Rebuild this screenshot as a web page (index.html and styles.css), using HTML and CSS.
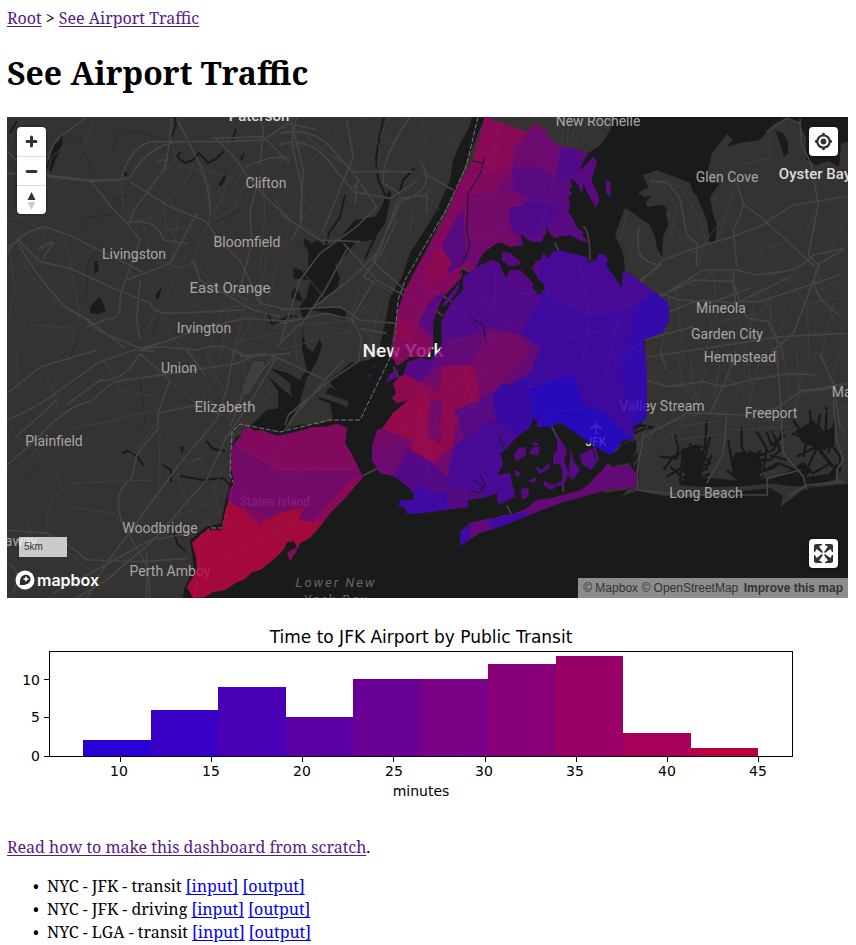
FILE: index.html
```html
<!DOCTYPE html>
<html lang="en">
<head>
<meta charset="utf-8">
<title>See Airport Traffic</title>
<link rel="stylesheet" href="styles.css">
</head>
<body>
<nav><a class="visited" href="#root">Root</a> &gt; <a class="visited" href="#traffic">See Airport Traffic</a></nav>
<main>
<h1>See Airport Traffic</h1>

<section class="map" aria-label="Map">
<svg class="map-canvas" viewBox="7 117 841 481" role="img" aria-label="Transit time by district">
<defs>
<path id="bronx" d="M485 117L527 132 536 122 538 126 547 130 549 139 560 145 588 153 583 161 579 172 587 164 593 157 597 162 594 171 591 180 598 195 599 202 595 207 592 200 587 191 583 182 582 193 577 183 570 178 572 187 568 189 572 193 568 197 570 205 568 212 573 219 577 228 583 232 582 236 590 243 580 240 570 235 560 236 555 238 549 232 547 223 546 233 541 242 530 241 520 233 523 245 510 247 503 243 497 243 483 253 473 272 462 268 462 277 443 297 437 310 433 323 433 347 427 357 410 357 397 366 392 357 393 350 396 330 398 310 405 290 417 267 443 220 453 200 455 190 473 160 480 133Z"/>
<path id="queens" d="M463 277L480 265 493 260 500 264 503 273 506 278 510 270 520 270 533 283 533 288 538 295 543 292 545 288 543 283 539 280 532 268 536 261 541 260 543 253 549 259 552 252 560 250 565 252 587 257 588 262 596 260 599 254 604 254 608 260 606 265 622 288 622 275 625 270 658 295 668 303 669 320 663 332 643 340 646 360 647 418 633 427 634 439 623 440 617 448 610 455 593 445 560 422 550 427 537 427 537 420 533 418 530 427 517 437 506 449 500 453 503 464 497 475 510 473 515 497 498 505 497 493 490 496 480 498 468 500 468 507 422 513 407 514 405 508 398 505 401 500 413 500 414 494 408 487 397 478 389 475 380 473 372 460 372 447 377 430 382 429 393 413 399 408 408 400 397 403 392 398 396 393 393 383 403 375 408 362 420 358 430 360 440 350 442 340 441 325 443 317 452 302 463 290Z"/>
<path id="rockaway" d="M460 532L470 523 487 519 498 517 503 515 510 515 524 510 537 500 552 498 570 493 581 490 588 485 597 475 603 470 607 463 613 467 630 465 637 475 636 487 607 490 560 503 527 516 510 523 480 533 460 546Z"/>
<path id="staten" d="M247 427L255 431 262 430 277 436 295 432 313 427 325 427 337 424 347 428 345 443 350 451 363 477 345 498 330 513 322 524 310 538 300 543 296 552 290 561 287 553 297 547 294 541 287 542 284 549 275 558 260 570 252 572 245 579 237 582 225 590 213 592 205 597 193 598 187 587 197 570 196 556 192 543 207 530 222 530 225 512 228 503 229 491 234 483 231 466 232 447Z"/>
<path id="islands" d="M514 455L519 448 526 447 526 455 516 461ZM530 451L534 447 540 447 538 455 530 454ZM528 481L536 477 535 483ZM521 489L528 488 529 496 522 500ZM535 467L542 470 549 463 550 468 540 474ZM544 481L556 486 552 490 544 486ZM532 443l4-1 3 3-5 1ZM515 470l5 2-1 5-4-2ZM557 434L567 450 564 461 569 474 563 486 553 485 563 480 563 474 560 464 553 464 553 456 557 450ZM580 455L595 447 599 459 591 470 582 464ZM571 448L573 460 577 466 580 470 573 480 568 475 570 462ZM502 252l8 1 10 8-1 4-10 1-7-6ZM606 180L611 183 610 197 606 192ZM397 377L398 369 390 374 386 383ZM442 305l18-23-3 10-12 14zM373 365l2 2-2 1zM368 375l3 0-2 3z"/>
<clipPath id="queens-clip"><use href="#queens"/></clipPath>
<clipPath id="bronx-clip"><use href="#bronx"/></clipPath>
<clipPath id="staten-clip"><use href="#staten"/></clipPath>
</defs>
<rect class="land" x="7" y="117" width="841" height="481"/>

<g class="water">
<path d="M472 117L468 130 462 140 457 151 453 160 450 180 437 210 423 233 410 253 402 277 390 297 385 323 380 345 383 352 368 360 350 363 340 372 328 380 336 390 349 400 347 408 330 403 333 420 318 424 298 425 281 432 266 431 254 427 236 437 231 448 231 480 225 503 221 523 206 527 190 540 194 568 184 589 183 598 848 598 848 484 806 488 780 507 783 496 770 488 690 497 664 496 637 491 622 496 629 488 639 479 636 440 622 444 612 457 618 465 630 463 630 489 560 500 545 420 600 430 620 440 640 427 655 427 642 424 645 340 658 296 625 270 623 253 615 235 618 227 625 208 632 212 638 217 650 225 655 237 657 248 662 257 663 237 668 225 666 213 668 210 663 205 648 207 645 203 652 195 645 197 638 193 648 187 643 175 657 170 690 183 692 190 697 197 707 220 710 243 715 243 717 225 713 215 710 197 720 183 710 183 708 170 712 153 727 134 733 139 727 147 740 143 760 140 765 134 773 125 787 117 612 117 612 127 601 145 588 153 560 145 520 250 455 300 435 360 397 366 390 350 398 310 455 190 485 117Z"/>
<path d="M785 117L798 122 806 137 806 160 816 165 828 161 839 167 841 143 848 142 848 117ZM775 130L784 134 788 143 788 153 784 157 779 140Z"/>
<path d="M540 225L600 240 620 295 480 290 450 320 445 370 390 400 380 360 425 345 425 310 460 260 500 235ZM490 430L560 415 612 445 618 462 600 500 500 520Z"/>
<path d="M54 145L59 141 63 133 62 145 58 154 51 172 46 167ZM94 262l3-2 2 10-4 4zM90 307l9-10 3 4 4 10-8 3-8-1zM156 294l6-8-3 12-3 2zM219 184l7-12 0 5-5 10zM240 158l5-7-3 10zM182 454l-2-8 4 1zM123 170l5 4-3 3z"/>
<g transform="translate(230 220) scale(.333333)">
<path d="M60 620l50-50 35-5 0-50-30-45 70 60-5-40-60-45 55 15 35 20 20-30-15-70 5-70-10-50 20-30 10-50-50-5 0-30 45 10 0-60-15-25 5-15 20 15 20-10 20 20 40-20 50-60 60-10 20-30 20-50 10 10-20 90-35 50-50 5-50 60-15 10 15 40-10 30-40 30-20 25 60 5 30 5-5 30-70-25-35-5-20 30 0 45 10 40 20 10 20-40 5 25-15 45-30 50-20 70-30 60-20 70-20 35z"/>
<path d="M300 500l60 35 0 10-75-25zM265 530l75 25 20 15-90-30zM195 205l15 15 10 25-35-10 0-20z"/>
</g>
</g>
<g class="creek">
<path d="M384 117l-5 22-3 20 2 20 8 18-2 12-7 10-2 18-10 22M415 168l-12 12-6 22M345 195l-5 22-11 16-4 16 5 20-2 14M175 117l1 8-6 15M180 152l-3 5 8 6 8-3 6-7 9 10 8-4 8-8M236 129l-4 12M10 133l7-12M268 312l4 12 16-7 9-1M122 453l6-2 9 5 7 10M163 465l8 5 0 12M180 476l23 4 20-2 8 8M206 441l7 8 12 2M174 533l4 12 8 6M270 285l-5 8"/>
<path d="M634 433l10-4 10-2M618 444l16-6"/>
</g>
<g class="marsh" transform="translate(640 400) scale(.333333)">
<path d="M105 105l10 40-5 30-50-5M70 210l30-40 60-30 30 0M80 230l50-30 20-50M90 200l60 50 60-30M130 145l-10 100M150 130l20 100M180 170l-50 40 30 40M200 60l-5 80-30 90M210 110l-20 80-40 60M215 165l-15 40-70 30M170 140l40 50-60 20M265 120l10 60 40 10-10 60M305 80v60l20 40-40 20M350 95l30 50-10 70M380 95l15 40 40-30M395 90l25 60-30 30-60 0M430 90l-30 60-50 20M330 150l20 70 60-20M360 150l-20 80M300 160l60 80M375 210l40-20 50 20M440 180l-50-15M460 60l40 60-10 50M510 30l5 90 60 80M540 40l-10 80M560 20l-5 130M585 60l-20 100M455 100l60 20 50 60M485 90l60 20-40 90M470 170l60-30 60 70M530 70l70 100 0 50M570 190l-50 30-30-20M260 210l50 40 60-20"/>
<path class="fill" d="M290 160l60 0 15 40-20 50-60-20-10-40zM470 95l50-30 20 40 40-20 0 50-40 10-50-20zM130 150l40-15 20 40-10 60-40 0zM120 245l90-8 80 8 80-5 60-15 60-35 20 20-20 25 80-10 20-30-5 40-70 20-60 0-60-8-90 8-90 3-90-5z"/>
</g>

<g class="park">
<path d="M112 150l4-14 18-5 24 7 12 18M62 143l18-6 5 16 6 18M130 195l-17 4-1 16-23 2-10 14M240 210l-24 12-18-2M150 338l12-26M22 482l15-14M140 376l5 45-5 10M86 299l2-36 15-22M60 358l18-15-10 16"/>
<path class="runway" d="M37 249l16-7M43 258l10-15M158 161l9-1-4 12M353 188l4-5-2 21M191 461l11-3"/>
<path class="apron" d="M253 360l12 1 0 8-15 25-6 2-3-9z"/>
</g>

<g class="minor">
<g transform="translate(0 110) scale(.333333)">
<path d="M22 330l40-10 65 40 10 45-40 60-60 20M80 315l50-85 80-30M205 100l-50 40-15 60M275 150l-25-40 30-80M190 375l20 80 30 160-40 130M30 430l15 110-20 85M260 630l-90-50-60-60-50-80M365 220l5 75 60 50 30 100 80 30M510 70l20 80-90 80M585 150l-35 80-60 50 10 80M530 165l110 20 60 20-60 50-50-80M600 155l25 60 10 100-70 160M690 200l-50 120M735 170l-30 60-80 90M620 340l80-40 60-130M540 300l-30 180M500 480l80-20 50 50M380 340l80-20 50 40 30 50M470 370l80-20 40 40M440 660l120-220M470 590l50 100 80 60M600 510l-50 60 80 40 110-30M680 560l-60 190M650 540l100 30M700 530l-40 220M740 560l-40 180M775 590l-80 160M620 510l150 80M640 490l150 90M785 180l10 110-20 300M860 140l-60 60M820 260l50 80M800 430l-20 160M830 470l-40 170M700 700l170-40M40 700l60-55 120 10"/>
</g>
<g transform="translate(0 350) scale(.333333)">
<path d="M22 210l25 50 40 20 80 80 40 110 140 20 10 30-60 60M130 65l35 70 15 60M50 10l5 90M300 10l60 110 110 20M360 90v40M120 290l-90 80M210 400l260-10M210 400l-50 40-20 60 5 60M470 220l-60 80-60 50M480 260l-5 200-70 70M500 290l110 80M520 100l80 70 80 30M620 20l60 120M660 60l-70 120M470 180l-90 20-80 20M325 215l-110 20M460 550l90-60 100-40M410 600l-70 70-50 20M180 590l120 90M200 700l-60-60M25 420l60 100 20 60M690 330l-50 80 20 80-60 40M530 370l40 110 80 60M730 30l10 80-60 100M800 105l15 30-30 20M750 400l40-90 60-30M700 480l60-70"/>
</g>
<g transform="translate(280 110) scale(.333333)">
<path d="M0 50l60 10 80 70 80 40M0 100l110 10 120 75M20 210l60-40 90-100M60 230l30 70 60 100M120 250l-60 90 60 40M0 380l80 120 50 60M240 20l60 90-10 80M330 20l-30 60 80 40 60 50M420 20l20 80 50 30 40-70M440 180l-60 60-40 90M350 270l50 30-10 70-80 80M320 450l-80 80-30 90M460 220l-60 80M420 240l60 60M310 540l-90 90-20 60M0 560l70-60M40 590l10 160M0 650l240-20M0 720l220-60M220 570l80 60M250 500l90 50M300 590l-40 160"/>
</g>
<g transform="translate(560 110) scale(.333333)">
<path d="M10 20l-5 80M30 20l-10 90M60 20l-35 85M90 30l-60 80M270 210l90 20 60 100 20 70M300 215l50 80-20 90M180 390l20-80M240 350l-35 90 40 60 80-20M320 300l50 100 40 30M440 390l60-80 20-70M460 260l40 50-30 90M480 170l50 50 60-30M570 160l70-20M630 60v85l-90 20M610 290l60 60M780 280l-50 100M600 420l90-30M610 400l-10 30 50 80M460 480l-50 50-50-20M415 470l20-80M460 470l10 160M510 490l30 160-90 30M560 520l70 80 5 150M590 540l-40 210M620 530l40 220M430 590l30 60-30 100M330 560l-30 190M690 510l50 80 10 160M710 480l-60 70-90 90M770 480l50 150 30 30M850 340l-60 120M850 510l-100 40M850 560l-100 20M350 540l20 210M450 640l140-30 60-40M700 590l-60 100M820 580l-40 170"/>
</g>
<g transform="translate(560 350) scale(.333333)">
<path d="M270 80l50 30 80 0 20 80-100 30M300 0l20 60 110 90M350 0l20 110 50 60M390 20l10 90M440 60l-30 80M480 40l-20 110 60 50M530 0l-20 90 90 90M560 30l20 90M600 20l-40 170M670 10l20 130 130-30M710 0l10 150M770 10l-50 90-20 80M840 0l-30 100M530 100l110 90M250 190l100 80 150-20M220 340l140-110 130-20M300 210l-80 140M270 210l-50 110M500 240l190-10M560 190l20 50M620 190l20 60M860 170l-80 20M830 200l30 70"/>
</g>
</g>
<g class="major">
<g transform="translate(0 110) scale(.333333)">
<path d="M22 190l120 5 130 15 90 0q35-120 110-115l200 0 120-5 70-50 90 20M140 200l140 15 110-10q50-100 150-110M145 150q10-60 50-80l60-45M22 125l60 60M270 210q60 80 110 130l40 50-40 110-20 60q5 70-30 65l-70 25M22 430q30-60 110-80l75 25 220 110M60 395l60 60 90 20 130 60 110 45q10 30 60 30l220-10M55 400q60 110 140 190l70 40 110 85M260 630l30 30 130 55 60-5M380 340q90-20 110 50l70 10M515 25l-5 60-15 90-90 120-20 50M390 215l110 70 120 50q40 70 100 115l60 130 90 20M530 25l70 140q30 70 30 150M640 80q70 60 95 110l70 80 60 50M780 25l10 30-10 110M640 85l150-5 80 80M735 170l70-25 65-5M770 230l-20 70 5 100-40 160M590 310l-80 150-130 50M580 450l20 60 160 90 80 20M425 715l70-20 110-40 130-30 140 10M420 720l60-10 110 10q80-30 150 20l130-10M420 690l-10-60 10-120M22 410l40-20"/>
</g>
<g transform="translate(0 350) scale(.333333)">
<path d="M22 130l100-80 170-50M22 210q90-40 130-70l140-100 110-40 60 5M22 345l90-80q90-100 160-110l70-60 210-30 160-25 70-30M50 260l120-110M420 10q-50 90-120 80l-100 75M420 10l90 80-35 95v50l-65 80-15 70q-60 40-30 130l80 140 5 90M470 190l170-35M700 10l-20 110-30 90-110 130-140 190-80 110-85 150M720 20l80-10M830 20l-80 140-70 100-60 130-160 180-140 120-90 55M160 730l130-70 160-90 120-20M22 540l120 10q60 30 120 80l170 5 130-10M22 640q50 20 15 90M440 610v134M620 80l-60-80"/>
</g>
<g transform="translate(280 110) scale(.333333)">
<path d="M0 70q90-20 150 40l70 80 70 100-60 60-110 80-60 80-60 190M0 105q70-30 140 40l80 100 110 20 80-50M0 310l120 80 120 5M50 20l-15 80 30 130 0 100-30 60M30 20l40 160-10 150M200 30l20 110-90 220M220 185l180 0M390 20q-90 130-80 200l50 30-60 170-90 90-120 90M420 155q60 80-60 120l-80 180 100 90M360 265l80-10 0 55M190 400l100 110 80 45M430 190l90 50M0 600l180-10 60 40 110 10M0 640l140-30 80 20"/>
</g>
<g transform="translate(230 220) scale(.333333)"><path d="M500 0l-40 90-60 80 30 15-65 110 30 60-10 70-90 60-120 100-10 30M0 390l40 15 85 0 160 75 55-60M135 405l-95 115-40 100M210 320l75-110 70-130M285 480l-95 110-25 40M210 310l-70 70M390 325l80 15"/></g>
<g transform="translate(280 350) scale(.333333)"><path d="M340 50l25 50M248 377l45-22M815 230l35 70 0 125M680 465l15 30"/></g>
<g transform="translate(280 110) scale(.333333)"><path d="M545 475l35 15M485 555l30 20M468 602l20 15M825 398l12 28"/></g>
<g transform="translate(560 110) scale(.333333)">
<path d="M270 215l50 0 40 50 20 110 30 25v70M235 350v70q10 40 70 45l-70 50M530 220l20 60-10 40-20 40 10 110M545 280q60 40 100 80l120 110M620 335l80-50 160-25M180 590l70-80 60-60 80-30 60-20 70-20 100-40M190 620q70-50 110-60l130-80 100 0 60 15 80-10q60-10 90-50l90-20M170 640l120-80 50-20 60-30 120 5 20 60 60 0 90-30 150-50M720 25l5 80 30 60 20 120-30 150 30 30M850 420l-70 40-80 210-60 50M520 485l5 90 40 50 60 10 40 80 5 35M300 550l60 20 100 5 110-40M260 630l160-60 110 10 160-80M190 750l60-60 150-40M770 475q-30 80 70 140M210 750l450-70 200-10M720 40l-40-15-60 40M70 350q20 10 20 100"/>
</g>
<g transform="translate(560 350) scale(.333333)">
<path d="M260 90l60 20 110-15 60 15 80-20 120-20 80 5M300 0l20 60M530 0l-40 110-40 80-70 0-130 70-20 110M430 190l130 5 90-20 70-50 140-25M650 0l10 130 10 180 60 70 10 40M500 200l-10 110-50 90M720 120l70 0 70-20M780 10l40 90 20 130M820 150l10 120 20 60-20 30v40M232 360v60l140 15 250 0v-50l100-25M690 435l50-30 110-10"/>
</g>
</g>

<g class="under">
<use href="#bronx"/><use href="#queens"/><use href="#rockaway"/><use href="#staten"/><use href="#islands"/>
</g>
<path class="border" d="M478 117l-12 50-20 43-40 68-8 22-4 50-6 12-28 58h-30l-50 12-40-8-8 8-2 42 4 10-5 20-7 24-12 0-12 10 2 30-8 40"/>

<g class="labels">
<text class="strong" x="259" y="121">Paterson</text>
<text x="598" y="126">New Rochelle</text>
<text x="266" y="188">Clifton</text><text x="134" y="259">Livingston</text><text x="247" y="247">Bloomfield</text>
<text class="large" x="230" y="293">East Orange</text><text x="204" y="333">Irvington</text><text x="179" y="373">Union</text>
<text class="large" x="225" y="412">Elizabeth</text><text x="54" y="446">Plainfield</text><text x="160" y="533">Woodbridge</text><text x="170" y="576">Perth Amboy</text>
<text x="21" y="546">away</text>
<text x="727" y="182">Glen Cove</text><text class="strong" x="815" y="179">Oyster Bay</text><text x="721" y="313">Mineola</text>
<text x="727" y="339">Garden City</text><text x="740" y="362">Hempstead</text><text x="662" y="411">Valley Stream</text><text x="771" y="418">Freeport</text>
<text x="872" y="397">Massapequa</text><text x="706" y="498">Long Beach</text>
<text class="small" x="275" y="506">Staten Island</text>
<text class="city" x="403" y="357">New York</text>
<text class="small white" x="596" y="446">JFK</text>
<path class="plane" d="M596 420l1 4 5 3v2l-5-1v4l2 2h-6l2-2v-4l-5 1v-2l5-3z"/>
<text class="bay" x="336" y="587">Lower New</text><text class="bay" x="336" y="604">York Bay</text>
</g>

<g class="districts">
<use class="c-37" href="#bronx"/><use class="c-27" href="#queens"/><use class="c-28" href="#islands"/><use class="c-30" href="#rockaway"/><use class="c-37" href="#staten"/>
<g clip-path="url(#bronx-clip)">
<path class="c-32" d="M527 132L514 150 512 170 490 197 467 200 463 235 475 280 530 260 610 260 610 140 570 117Z"/>
<path class="c-28" d="M512 167l25 0 18 10 5-20 14-6 30-5v70l-20 40-66-10-9-24 3-17 17-6-16-10z"/>
<path class="c-26" d="M510 207l16-6 30 0 0 20-25 14-20-7zM560 150l15-3 5 20-15 15-8-15z"/>
<path class="c-38" d="M485 117l43 15-16 15-1 13-19 13-18-17z"/>
<path class="c-33" d="M467 194h18l20-4 20 15-17 3-1 18 12 12-1 14-37-5-14-14z"/>
<path class="c-28" d="M463 210l3 40 5 10-23 13-5-10-6-8 18-35z"/>
<path class="c-28" d="M440 293l-10 8-8 15-4 8 17 15 5-28 10-15z"/>
<path class="c-40" d="M398 318l17 10-5 16-16-8zM440 245l12 18-10 15-14 6-3-12z"/>
</g>
<g clip-path="url(#queens-clip)">
<path class="c-24" d="M540 245l160 0v135l-60 60-100-20 0-110z"/>
<path class="c-26" d="M440 310l23-40 35-10 10 25 32 10 5 15-45 15-20 20-20 10z"/>
<path class="c-22" d="M545 294l45 22 42-10 30-20 20 40-32 20 5 80-46 40-80-35 5-43-16-10-15-20z"/>
<path class="c-17" d="M655 290l20 15-2 25-28 14 5 80-17 5-15-70 12-14 5-38z"/>
<path class="c-12" d="M529 388l43-15 10 26 0 20-5 12-30 0-19-22z"/>
<path class="c-10" d="M560 408l20-5 25 10 28 28-10 2-13 17-50-34z"/>
<path class="c-20" d="M492 385l30-20 7 20 5 40-20 14-18-17z"/>
<path class="c-30" d="M438 358l5-15 45-15 32 5 20 15-10 25-20 12-30-7-38 10-20-6z"/>
<path class="c-33" d="M443 366l27-2 20-35 35 10 6 15-36 37-15 8-15 16-35 0-20-26z"/>
<path class="c-40" d="M393 380l12-6 15 8 20 12 3-28 30 0 7 22-3 20-18 15-3 53-16 0-19-15-25-27-30 5z"/>
<path class="c-41" d="M382 428l26-28 15-8 12 10-4 18 10 30-6 12-22-12z"/>
<path class="c-33" d="M366 440l14-12 33 13-20 34-38-5zM430 400l12 0-2 45-12-10z"/>
<path class="c-32" d="M413 441l-22 34-20 0 0-25zM432 466l22-21 0-20 14 10-15 40z"/>
<path class="c-27" d="M410 450l22 12 20 18 20 0-10 25-46-3-20-28z"/>
<path class="c-28" d="M455 410l20-8 18 10 5 6-22 16-12 3z"/>
<path class="c-24" d="M455 445l35-25 30 15-22 42 18 0 0 30-18 0-18-14-34-10z"/>
<path class="c-18" d="M395 498l17-6 10-9 10 10 15-1 1 24-55 0z"/>
</g>
<path class="c-18" d="M460 532l10-8v16l-10 6zM487 520l23-5 16-3 4 3-20 8-18 7z"/>
<g clip-path="url(#staten-clip)">
<path class="c-33" d="M225 440l13 6 40 25 85 0 0 12-60 60-40-30-40-10z"/>
<path class="c-44r" d="M180 500l49 2 15 8 15 15 20-12 25-6-5 13 25 3-20 20-100 60-35 0z"/>
<path class="c-38" d="M363 477l-12 2-38 42 12 4 40-42z"/>
</g>
</g>
<path class="inlet" d="M462 270l-3 4M469 317l14 8 3 16M485 157l-5 17-12 20-1 39 3 13-8 18M472 161l12 2M474 480l10 8M480 475l5 8-5 10-10-2M504 449l-5-12M592 447l4 12"/>
<g class="seams">
<path d="M467 200l23-3 22-27M463 235l20 0 34-8M510 207l16-6h30M460 195l40-50M440 250l25 14M405 300l35 15M420 285l25 12M398 335l25 15M495 270v40M545 294l45 22 42-10 30-20M590 316l-8 50M520 340l10 48 43-15 70-30M643 340l-60 60M465 366l10 50M420 382l20 50M393 413l40 45M410 445l65-40 20 10M495 385l-10 40M240 447l40 22h75M230 502l35-15 50-20M260 490l25-50M195 570l45-25 60-30M500 122l-10 50M560 150l-20 80M580 265l10 50M620 310l-15 70M450 310l60-15 40-5M450 340l70-5M470 290l40 35M440 390l60-20M540 420q40-25 80 8M420 410l10 70M470 440l20 50M560 340l70-15"/>
</g>
</svg>

<div class="controls">
<button type="button" aria-label="Zoom in"><svg viewBox="0 0 29 29"><path d="M14.5 8.5c-.75 0-1.5.75-1.5 1.5v3h-3c-.75 0-1.5.75-1.5 1.5S9.250 16 10 16h3v3c0 .75.75 1.500 1.500 1.500S16 19.750 16 19v-3h3c.75 0 1.500-.75 1.500-1.500S19.750 13 19 13h-3v-3c0-.75-.75-1.500-1.500-1.500z"/></svg></button>
<button type="button" aria-label="Zoom out"><svg viewBox="0 0 29 29"><path d="M10 13c-.75 0-1.500.75-1.500 1.500S9.250 16 10 16h9c.75 0 1.500-.75 1.500-1.500S19.750 13 19 13h-9z"/></svg></button>
<button type="button" aria-label="Reset bearing to north"><svg viewBox="0 0 29 29"><path d="M10.500 14l4-8 4 8z"/><path class="south" d="M10.500 16l4 8 4-8z"/></svg></button>
</div>
<div class="controls locate">
<button type="button" aria-label="Find my location"><svg viewBox="0 0 20 20"><path fill-rule="evenodd" d="M10 4C9 4 9 5 9 5v.1A5 5 0 0 0 5.100 9H5s-1 0-1 1 1 1 1 1h.1A5 5 0 0 0 9 14.900v.1s0 1 1 1 1-1 1-1v-.1a5 5 0 0 0 3.900-3.900h.1s1 0 1-1-1-1-1-1h-.1A5 5 0 0 0 11 5.100V5s0-1-1-1zm0 2.500a3.500 3.500 0 1 1 0 7 3.500 3.500 0 1 1 0-7z"/><circle cx="10" cy="10" r="2"/></svg></button>
</div>
<div class="controls fullscreen">
<button type="button" aria-label="Enter fullscreen"><svg viewBox="0 0 29 29"><path d="M24 16v5.500c0 1.750-.75 2.500-2.500 2.500H16v-1l3-1.500-4-5.500 1-1 5.500 4 1.500-3h1zM6 16l1.500 3 5.500-4 1 1-4 5.500 3 1.500v1H7.500C5.750 24 5 23.250 5 21.500V16h1zm7-11v1l-3 1.500 4 5.500-1 1-5.500-4L6 13H5V7.500C5 5.750 5.750 5 7.500 5H13zm11 2.500c0-1.750-.75-2.500-2.500-2.500H16v1l3 1.500-4 5.500 1 1 5.500-4 1.500 3h1V7.500z"/></svg></button>
</div>
<div class="scale">5km</div>
<a class="logo" href="#mapbox"><svg viewBox="0 0 20 20"><circle cx="10" cy="10" r="9.500" fill="#fff"/><path fill="#292929" d="M5 15C4.500 10 5.500 5 11 4.800c2.700 0 4.500 2 4.500 4.200 0 5-5.500 6.500-10.500 6z"/><path fill="#fff" d="M11 5.700l1 2.300 2.300 1-2.300 1L11 12.300 10 10 7.700 9 10 8z"/></svg><span>mapbox</span></a>
<div class="attribution"><a href="#mapbox">© Mapbox</a> <a href="#osm">© OpenStreetMap</a> <a class="improve" href="#improve">Improve this map</a></div>
</section>

<svg class="chart" viewBox="7 598 841 227" role="img" aria-label="Time to JFK Airport by Public Transit">
<text class="chart-title" x="421" y="643">Time to JFK Airport by Public Transit</text>
<g shape-rendering="crispEdges">
<rect x="83" y="740" width="68" height="16" fill="#2a00d4"/>
<rect x="151" y="710" width="67" height="46" fill="#3900c6"/>
<rect x="218" y="687" width="68" height="69" fill="#4a00b5"/>
<rect x="286" y="717" width="67" height="39" fill="#5c00a3"/>
<rect x="353" y="679" width="68" height="77" fill="#6a0093"/>
<rect x="421" y="679" width="67" height="77" fill="#7a0085"/>
<rect x="488" y="664" width="68" height="92" fill="#880077"/>
<rect x="556" y="656" width="67" height="100" fill="#980067"/>
<rect x="623" y="733" width="68" height="23" fill="#a70058"/>
<rect x="691" y="748" width="67" height="8" fill="#b90046"/>
<path class="axis" d="M49.500 651.500H792.500V756.500H49.500ZM44 756.500h5M44 717.500h5M44 679.500h5M120.500 757v5M211.500 757v5M302.500 757v5M393.500 757v5M485.500 757v5M576.500 757v5M667.500 757v5M758.500 757v5"/>
</g>
<g class="y-ticks"><text x="40" y="761">0</text><text x="40" y="722">5</text><text x="40" y="685">10</text></g>
<g class="x-ticks"><text x="119" y="776">10</text><text x="211" y="776">15</text><text x="302" y="776">20</text><text x="394" y="776">25</text><text x="484" y="776">30</text><text x="575" y="776">35</text><text x="667" y="776">40</text><text x="758" y="776">45</text><text x="421" y="796">minutes</text></g>
</svg>

<p><a class="visited" href="#howto">Read how to make this dashboard from scratch</a>.</p>
<ul>
<li>NYC - JFK - transit <a href="#i1">[input]</a> <a href="#o1">[output]</a></li>
<li>NYC - JFK - driving <a href="#i2">[input]</a> <a href="#o2">[output]</a></li>
<li>NYC - LGA - transit <a href="#i3">[input]</a> <a href="#o3">[output]</a></li>
</ul>
</main>
</body>
</html>
```
FILE: styles.css
```css
body {
  margin: 0;
  padding: 7px 8px 0 7px;
  background: #fff;
  color: #000;
  font-family: "Noto Serif", "DejaVu Serif Condensed", serif;
  font-size: 16px;
  line-height: 23px;
}
a { color: #00e; text-underline-offset: 2px; }
a.visited { color: #551a8b; }
h1 { margin: 21px 0 22px; font-size: 32px; line-height: 44px; font-weight: 700; }
p { margin: 11px 0 16px; }
ul { margin: 0; padding-left: 40px; }
li::marker { content: "•\00a0\00a0"; }

.map { position: relative; overflow: hidden; background: #191a1a; }
.map-canvas, .chart { display: block; width: 100%; height: auto; }
.land { fill: #343332; }
.water { fill: #191a1a; }
.creek { fill: none; stroke: #191a1a; stroke-width: 2; stroke-linejoin: round; }
.inlet { fill: none; stroke: #191a1a; stroke-width: 1; }
.marsh { fill: none; stroke: #191a1a; stroke-width: 7; stroke-linejoin: round; }
.marsh .fill { fill: #191a1a; }
.park { fill: none; stroke: #292b29; stroke-width: 1; }
.runway { stroke: #414343; stroke-width: 2; }
.apron { fill: #3c3f3e; }
.minor { fill: none; stroke: #3e3e3e; stroke-width: 3; stroke-linejoin: round; }
.major { fill: none; stroke: #444; stroke-width: 5; stroke-linejoin: round; }
.under { fill: #343332; }
.border { fill: none; stroke: #777; stroke-width: 1; stroke-dasharray: 5 2; }
.labels {
  fill: #a6a6a6;
  font-family: Roboto, sans-serif;
  font-size: 14px;
  text-anchor: middle;
}
.large { font-size: 15px; }
.small { font-size: 12px; }
.strong { font-size: 15px; font-weight: 500; fill: #ddd; }
.city { font-size: 19px; font-weight: 500; fill: #eee; }
.white { fill: #eee; }
.plane { fill: #999; }
.bay { font-size: 13px; font-style: italic; letter-spacing: 2px; fill: #666; }
.districts { opacity: .8; }
.c-10 { fill: #2200db; }
.c-12 { fill: #2600db; }
.c-17 { fill: #3400c8; }
.c-18 { fill: #4200bd; }
.c-20 { fill: #3b00bd; }
.c-22 { fill: #4000b8; }
.c-24 { fill: #4c00ad; }
.c-26 { fill: #5600a2; }
.c-27 { fill: #5e009a; }
.c-28 { fill: #620094; }
.c-30 { fill: #700088; }
.c-32 { fill: #7b0080; }
.c-33 { fill: #820076; }
.c-37 { fill: #960069; }
.c-38 { fill: #a00060; }
.c-40 { fill: #a40058; }
.c-41 { fill: #ac0050; }
.c-44r { fill: #bf003e; }
.seams { fill: none; stroke: #9932aa; stroke-width: 1; opacity: .16; }

.controls {
  position: absolute;
  top: 10px;
  left: 10px;
  overflow: hidden;
  border-radius: 4px;
  background: #fff;
  box-shadow: 0 0 0 2px rgba(0, 0, 0, .1);
}
.controls button {
  display: block;
  box-sizing: border-box;
  width: 29px;
  height: 29px;
  padding: 0;
  border: 0;
  background: transparent;
}
.controls button + button { border-top: 1px solid #ddd; }
.controls svg { display: block; width: 29px; height: 29px; fill: #333; }
.controls .south { fill: #ccc; }
.locate, .fullscreen { left: auto; right: 10px; }
.fullscreen { top: auto; bottom: 30px; }
.scale {
  position: absolute;
  left: 12px;
  bottom: 41px;
  box-sizing: border-box;
  width: 48px;
  height: 20px;
  padding: 0 5px;
  background: rgba(255, 255, 255, .75);
  color: #333;
  font: 10px/20px "Liberation Sans", sans-serif;
}
.logo {
  position: absolute;
  left: 8px;
  bottom: 8px;
  display: flex;
  align-items: center;
  gap: 2px;
  color: #fff;
  font: 600 16px/20px Inter, sans-serif;
  text-decoration: none;
}
.logo svg { width: 20px; height: 20px; }
.attribution {
  position: absolute;
  right: 0;
  bottom: 0;
  padding: 0 5px;
  background: rgba(255, 255, 255, .5);
  font: 12px/20px "Liberation Sans", sans-serif;
}
.attribution a { color: #333; text-decoration: none; }
.attribution .improve { margin-left: 2px; font-weight: 700; }

.chart { font-family: "DejaVu Sans", sans-serif; font-size: 14px; fill: #000; }
.chart-title { font-size: 17px; text-anchor: middle; }
.axis { fill: none; stroke: #000; stroke-width: 1; }
.y-ticks { text-anchor: end; }
.x-ticks { text-anchor: middle; }
```
